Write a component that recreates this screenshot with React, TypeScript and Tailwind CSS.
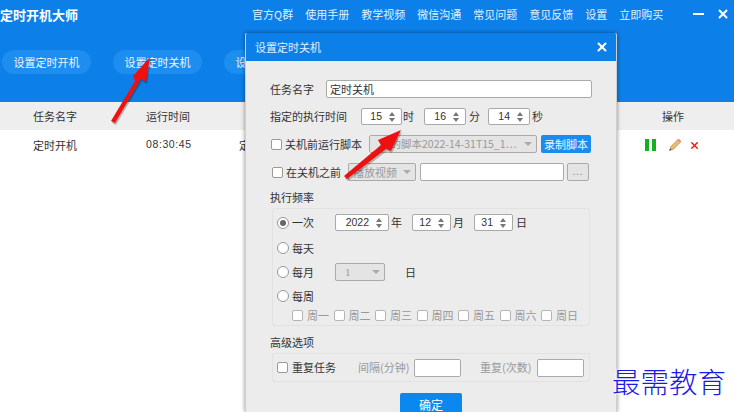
import { X } from "lucide-react";

const navItems = ["官方Q群", "使用手册", "教学视频", "微信沟通", "常见问题", "意见反馈", "设置", "立即购买"];
const weekDays = ["周一", "周二", "周三", "周四", "周五", "周六", "周日"];

function Spinner({ value, width }: { value: string; width: string }) {
  return (
    <div className={`flex h-[17px] items-center justify-end rounded-[2px] border border-[#a9a9a9] bg-white pr-[6px] ${width}`}>
      <span className="mr-[7px] font-['Liberation_Sans'] text-[10.5px] text-[#333]">{value}</span>
      <div className="flex flex-col gap-[2px]">
        <span className="h-0 w-0 border-x-[3.5px] border-b-[4px] border-x-transparent border-b-[#777]" />
        <span className="h-0 w-0 border-x-[3.5px] border-t-[4px] border-x-transparent border-t-[#777]" />
      </div>
    </div>
  );
}

function Checkbox({ disabled }: { disabled?: boolean }) {
  return <div className={`size-[11px] shrink-0 rounded-[2px] border bg-white ${disabled ? "border-[#b5b5b5]" : "border-[#999]"}`} />;
}

function Radio({ checked }: { checked?: boolean }) {
  return (
    <div className="flex size-[12px] shrink-0 items-center justify-center rounded-full border border-[#999] bg-white">
      {checked && <div className="size-[6px] rounded-full bg-[#666]" />}
    </div>
  );
}

function SelectBox({ children, width }: { children: React.ReactNode; width: string }) {
  return (
    <div className={`flex h-[18px] items-center justify-between rounded-[2px] border border-[#aaa] bg-[#e4e4e4] pr-[4px] text-[#999] ${width}`}>
      {children}
      <span className="h-0 w-0 border-x-[4px] border-t-[4px] border-x-transparent border-t-[#aaa]" />
    </div>
  );
}

function Arrows() {
  return (
    <svg className="pointer-events-none absolute inset-0 z-30" width="734" height="412" viewBox="0 0 734 412">
      <g fill="#000" opacity="0.25" transform="translate(1 2)">
        <path d="M111 121 L135 81 L133 76 L150 57 L146 82 L141 79 L115 123 Z" />
        <path d="M344 176 L381 145 L378 140 L401 130 L391 151 L386 149 L347 179 Z" />
      </g>
      <g fill="#ee1111">
        <path d="M111 121 L135 81 L133 76 L150 57 L146 82 L141 79 L115 123 Z" />
        <path d="M344 176 L381 145 L378 140 L401 130 L391 151 L386 149 L347 179 Z" />
      </g>
    </svg>
  );
}

export default function App() {
  return (
    <div className="relative h-[412px] w-[734px] overflow-hidden bg-white font-['Noto_Sans_CJK_SC',sans-serif] text-[11px] text-[#333]">
      {/* Main window */}
      <div className="h-[102px] bg-[#0c7fe8] text-white">
        <div className="flex h-[28px] items-center">
          <span className="text-[13px] font-bold leading-none">定时开机大师</span>
          <nav className="ml-[174px] flex gap-[12px] text-[11px] text-[#e3f0ff]">
            {navItems.map((item) => (
              <span key={item}>{item}</span>
            ))}
          </nav>
          <div className="ml-[30px] h-[2px] w-[11px] bg-white" />
          <X size={14} strokeWidth={3.5} className="ml-[12px]" />
        </div>
        <div className="mt-[22px] flex gap-[22px] pl-[2px]">
          {["设置定时开机", "设置定时关机", "设置定时任务"].map((label) => (
            <button key={label} className="h-[24px] w-[89px] rounded-full bg-[#1d8df0] text-[11px] text-[#eef6ff]">
              {label}
            </button>
          ))}
        </div>
      </div>

      <div className="flex h-[28px] items-center bg-[#eeeeee] text-[11px]">
        <span className="ml-[33px] w-[113px]">任务名字</span>
        <span className="w-[516px]">运行时间</span>
        <span>操作</span>
      </div>
      <div className="flex h-[30px] items-center text-[11px]">
        <span className="ml-[33px] w-[113px]">定时开机</span>
        <span className="w-[93px] font-['Liberation_Sans'] text-[10.5px] tracking-[0.6px]">08:30:45</span>
        <span className="w-[406px]">定</span>
        <div className="flex items-center gap-[3px]">
          <span className="h-[12px] w-[4px] bg-[#14b01e]" />
          <span className="h-[12px] w-[4px] bg-[#14b01e]" />
        </div>
        <svg className="ml-[12px]" width="14" height="14" viewBox="0 0 14 14">
          <path d="M1.5 12.5 L3 8.5 L10 1.5 L12.5 4 L5.5 11 Z" fill="#e9bf6b" stroke="#a8864a" strokeWidth="0.8" />
          <path d="M9.5 2 L11 .8 L13.2 3 L12 4.4 Z" fill="#e58f83" />
          <path d="M1.5 12.5 L2.2 10.4 L3.6 11.8 Z" fill="#555" />
        </svg>
        <X size={11} strokeWidth={3} className="ml-[7px] text-[#f01010]" />
      </div>

      {/* Dialog */}
      <div className="absolute left-[245px] top-[33px] z-10 h-[379px] w-[372px] overflow-hidden rounded-t-[2px] border-x border-[#cfcfcf] bg-[#ececec] shadow-[0_0_4px_rgba(0,0,0,0.45)]">
        <div className="flex h-[28px] items-center justify-between bg-[#0c7fe8] pl-[9px] pr-[7px] text-[11px] text-[#e3f0ff]">
          <span>设置定时关机</span>
          <X size={14} strokeWidth={3.5} className="text-white" />
        </div>
        <div className="pl-[24px] pt-[19px]">
          <div className="flex h-[18px] items-center">
            <span className="w-[56px]">任务名字</span>
            <div className="flex h-[18px] w-[266px] items-center rounded-[2px] border border-[#aaa] bg-white pl-[3px]">定时关机</div>
          </div>
          <div className="mt-[10px] flex h-[17px] items-center">
            <span className="w-[91px]">指定的执行时间</span>
            <Spinner value="15" width="w-[41px]" />
            <span className="ml-[1px] w-[21px]">时</span>
            <Spinner value="16" width="w-[42px]" />
            <span className="ml-[3px] w-[19px]">分</span>
            <Spinner value="14" width="w-[42px]" />
            <span className="ml-[2px]">秒</span>
          </div>
          <div className="mt-[10px] flex h-[18px] items-center">
            <div className="ml-[1px]"><Checkbox /></div>
            <span className="ml-[3px] w-[84px]">关机前运行脚本</span>
            <SelectBox width="w-[168px]">
              <span className="truncate pl-[10px] text-[10.5px]">我的脚本2022-14-31T15_1⋯</span>
            </SelectBox>
            <button className="ml-[4px] h-[18px] w-[50px] rounded-[2px] bg-[#1a8cf0] text-[11px] text-[#eef6ff]">录制脚本</button>
          </div>
          <div className="mt-[10px] flex h-[18px] items-center">
            <div className="ml-[2px]"><Checkbox /></div>
            <span className="ml-[3px] w-[62px]">在关机之前</span>
            <SelectBox width="w-[68px]">
              <span className="pl-[4px]">播放视频</span>
            </SelectBox>
            <div className="ml-[4px] h-[18px] w-[144px] rounded-[2px] border border-[#aaa] bg-white" />
            <div className="ml-[3px] flex h-[18px] w-[22px] items-center justify-center rounded-[2px] border border-[#aaa] bg-[#e4e4e4] text-[9px] tracking-[1px] text-[#888]">...</div>
          </div>

          <div className="mt-[8px] h-[16px] leading-[16px]">执行频率</div>
          <div className="ml-[2px] mt-[3px] h-[118px] w-[318px] rounded-[2px] border border-[#e2e2e2] pl-[4px] pt-[5px]">
            <div className="flex h-[17px] items-center">
              <Radio checked />
              <span className="ml-[3px] w-[43px]">一次</span>
              <Spinner value="2022" width="w-[54px]" />
              <span className="ml-[2px] w-[21px]">年</span>
              <Spinner value="12" width="w-[39px]" />
              <span className="ml-[2px] w-[21px]">月</span>
              <Spinner value="31" width="w-[39px]" />
              <span className="ml-[3px]">日</span>
            </div>
            <div className="mt-[9px] flex h-[16px] items-center">
              <Radio />
              <span className="ml-[3px]">每天</span>
            </div>
            <div className="mt-[7px] flex h-[18px] items-center">
              <Radio />
              <span className="ml-[3px] w-[43px]">每月</span>
              <SelectBox width="w-[50px]">
                <span className="pl-[9px] font-['Liberation_Serif'] text-[11px]">1</span>
              </SelectBox>
              <span className="ml-[20px]">日</span>
            </div>
            <div className="mt-[7px] flex h-[16px] items-center">
              <Radio />
              <span className="ml-[3px]">每周</span>
            </div>
            <div className="ml-[15px] mt-[3px] flex h-[16px] items-center">
              {weekDays.map((day) => (
                <div key={day} className="flex w-[41.5px] items-center">
                  <Checkbox disabled />
                  <span className="ml-[4px] text-[#999]">{day}</span>
                </div>
              ))}
            </div>
          </div>

          <div className="mt-[8px] h-[16px] leading-[16px]">高级选项</div>
          <div className="ml-[2px] mt-[3px] flex h-[29px] w-[318px] items-center rounded-[2px] border border-[#e2e2e2] pl-[4px]">
            <Checkbox />
            <span className="ml-[4px] w-[66px]">重复任务</span>
            <span className="w-[56px] text-[#999]">间隔(分钟)</span>
            <div className="h-[18px] w-[47px] rounded-[2px] border border-[#aaa] bg-white" />
            <span className="ml-[19px] w-[57px] text-[#999]">重复(次数)</span>
            <div className="h-[18px] w-[47px] rounded-[2px] border border-[#aaa] bg-white" />
          </div>

          <div className="mt-[11px] flex justify-center pr-[24px]">
            <button className="h-[30px] w-[62px] rounded-[2px] bg-[#0a88f0] pb-[7px] text-[12px] text-white">确定</button>
          </div>
        </div>
      </div>

      <Arrows />

      {/* Watermark */}
      <div className="absolute left-[612px] top-[362px] z-20 text-[28.5px] font-light leading-[38px] text-[#1a1ae8] [text-shadow:0_0_3px_#fff,0_0_3px_#fff]">
        最需教育
      </div>
    </div>
  );
}
